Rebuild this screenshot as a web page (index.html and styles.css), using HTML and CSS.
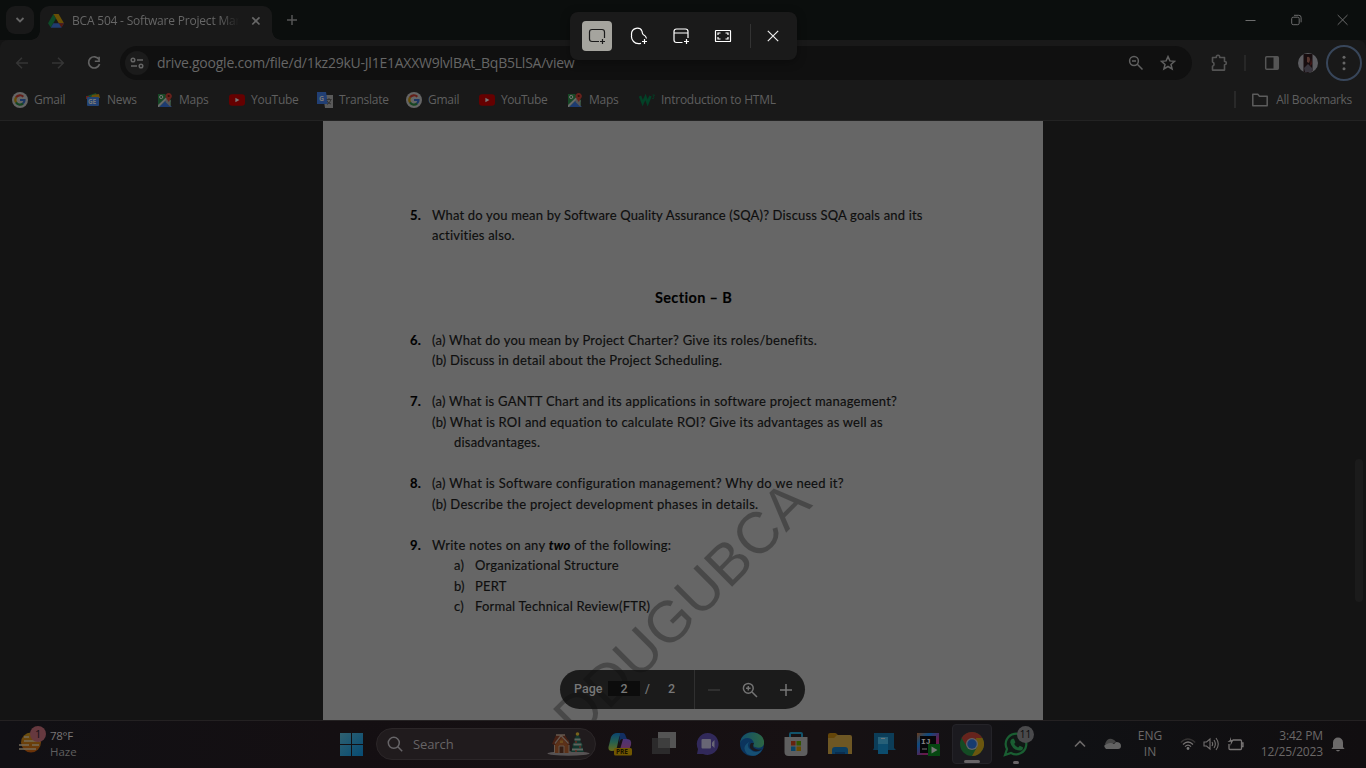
FILE: index.html
```html
<!DOCTYPE html>
<html lang="en">
<head>
<meta charset="utf-8">
<title>BCA 504 - Software Project Management</title>
<link rel="stylesheet" href="styles.css">
</head>
<body>
<svg class="defs" width="0" height="0">
  <defs>
    <linearGradient id="winG" x1="0" y1="0" x2="1" y2="1"><stop offset="0" stop-color="#2f6070"/><stop offset="1" stop-color="#064b73"/></linearGradient>
    <linearGradient id="copA" x1="0" y1="0" x2="0" y2="1"><stop offset="0" stop-color="#0b4570"/><stop offset=".5" stop-color="#256050"/><stop offset="1" stop-color="#686b18"/></linearGradient>
    <linearGradient id="copB" x1="0" y1="0" x2="0" y2="1"><stop offset="0" stop-color="#4a3478"/><stop offset="1" stop-color="#70304c"/></linearGradient>
    <linearGradient id="edgeA" x1="0" y1="0" x2="1" y2="0"><stop offset="0" stop-color="#114f6c"/><stop offset="1" stop-color="#2d6642"/></linearGradient>
    <linearGradient id="ijG" x1="0" y1="0" x2="1" y2="1"><stop offset="0" stop-color="#6a3c1c"/><stop offset=".3" stop-color="#0c4a80"/><stop offset=".65" stop-color="#6a1748"/><stop offset="1" stop-color="#303a80"/></linearGradient>
    <symbol id="g" viewBox="0 0 16 16"><circle cx="8" cy="8" r="8" fill="#656565"/><g fill="none" stroke-width="2.2"><path d="M4 5.500A4.600 4.600 0 0 1 11.300 4.700" stroke="#641e18"/><path d="M4.100 5.400a4.700 4.700 0 0 0 0 5.100" stroke="#654b05"/><path d="M4 10.400a4.600 4.600 0 0 0 7.100 1" stroke="#154522"/><path d="M8 8h4.500a4.500 4.500 0 0 1-1.500 3.500" stroke="#1b3663"/></g></symbol>
    <symbol id="yt" viewBox="0 0 16 16"><rect y="2.300" width="16" height="11.400" rx="3" fill="#650000"/><path d="M6.400 5.700v4.600l4-2.300z" fill="#777"/></symbol>
    <symbol id="map" viewBox="0 0 16 16"><path d="M1 2h7l6 6v7H1z" fill="#174826"/><path d="M2 15 8.500 8.500 15 15z" fill="#1d3b70"/><path d="m1 13 8.500-8L14 9l-3 2-2.500-2.500L2 15H1z" fill="#696969"/><path d="m9.500 5 4 4V15l-5-5z" fill="#555"/><circle cx="4.200" cy="5" r="1.600" fill="none" stroke="#777"/><path d="M11.700 10 8.600 5.100A3.200 3.200 0 1 1 14.800 5z" fill="#67221c"/><circle cx="11.700" cy="4" r="1.100" fill="#350c08"/></symbol>
  </defs>
</svg>

<div class="screen">
  <header class="titlebar">
    <div class="tab-search"><svg width="12" height="12" viewBox="0 0 12 12"><path d="m2.500 4 3.500 3.500L9.500 4" fill="none" stroke="#666" stroke-width="1.800"/></svg></div>
    <div class="tab">
      <svg width="16" height="14" viewBox="0 0 16 14"><path d="M5.400 0 8 4.500 2.800 13.400 0 9.200z" fill="#0e4a28"/><path d="M5.400 0h5.200L16 9.200h-5.200z" fill="#695006"/><path d="M5.300 9.200H16l-2.600 4.500H2.700z" fill="#203d70"/><path d="m10.800 9.200 5.200 0-2.600 4.400z" fill="#56190f"/></svg>
      <span class="tab-title">BCA 504 - Software Project Mar</span>
      <svg class="tab-x" width="10" height="10" viewBox="0 0 10 10"><path d="m1.300 1.300 7.200 7.200m0-7.200L1.300 8.500" stroke="#676767" stroke-width="1.700"/></svg>
    </div>
    <svg class="plus" width="12" height="12" viewBox="0 0 12 12"><path d="M6 1v10M1 6h10" stroke="#555" stroke-width="1.500"/></svg>
    <div class="win-buttons">
      <svg width="11" height="12" viewBox="0 0 11 12"><path d="M.5 6.500h10" stroke="#6c6c6c"/></svg>
      <svg width="11" height="12" viewBox="0 0 11 12"><rect x=".7" y="3.200" width="7.500" height="7.500" rx="1.500" fill="none" stroke="#6c6c6c"/><path d="M3 1.300h4.700a2.300 2.300 0 0 1 2.400 2.400v4.600" fill="none" stroke="#6c6c6c"/></svg>
      <svg width="11" height="12" viewBox="0 0 11 12"><path d="m.7 1 9.800 9.800m0-9.800L.7 10.800" stroke="#6c6c6c"/></svg>
    </div>
  </header>

  <div class="toolbar">
    <svg class="nav" width="16" height="16" viewBox="0 0 16 16"><path d="M14 8H3m5-5.300L2.700 8 8 13.300" fill="none" stroke="#353535" stroke-width="1.500"/></svg>
    <svg class="nav" width="16" height="16" viewBox="0 0 16 16"><path d="M2 8h11M8 2.700 13.300 8 8 13.300" fill="none" stroke="#353535" stroke-width="1.500"/></svg>
    <svg class="nav" width="16" height="16" viewBox="0 0 16 16"><path d="M13 4.400A5.600 5.600 0 1 0 13.600 9" fill="none" stroke="#626262" stroke-width="1.700"/><path d="M13.900 1.800V7H8.800V5.500h3.500V1.800z" fill="#626262"/></svg>
    <div class="omnibox">
      <div class="site-info"><svg width="14" height="12" viewBox="0 0 14 12"><g fill="none" stroke="#656565" stroke-width="1.500"><circle cx="3" cy="3" r="1.800"/><path d="M7 3h6M1 9h6"/><circle cx="11" cy="9" r="1.800"/></g></svg></div>
      <span class="url">drive.google.com/file/d/1kz29kU-Jl1E1AXXW9lvlBAt_BqB5LlSA/view</span>
      <svg class="zoomout" width="16" height="16" viewBox="0 0 16 16"><g fill="none" stroke="#606060" stroke-width="1.500"><circle cx="6" cy="6" r="4.400"/><path d="m9.300 9.300 5.200 5.200M4 6h4"/></g></svg>
      <svg width="16" height="16" viewBox="0 0 16 16"><path d="m8 1.600 1.900 4.300 4.700.4-3.600 3.100 1.100 4.600L8 11.500 3.900 14 5 9.400 1.400 6.300l4.700-.4z" fill="none" stroke="#606060" stroke-width="1.500"/></svg>
    </div>
    <div class="actions">
      <svg width="18" height="18" viewBox="0 0 18 18"><path d="M2.500 3.500h3.800V2.900a1.700 1.700 0 0 1 3.400 0v.6h4.800v4h.3a1.600 1.600 0 0 1 0 3.200h-.3v5.400h-12v-3.800a2.200 2.200 0 0 0 0-4.200z" fill="none" stroke="#545454" stroke-width="1.600" stroke-linejoin="round"/></svg>
      <i class="bar"></i>
      <svg class="panel" width="16" height="16" viewBox="0 0 16 16"><rect x="1.700" y="1.700" width="12.600" height="12.600" rx="1" fill="none" stroke="#555" stroke-width="1.500"/><path d="M9.500 2H14v12H9.500z" fill="#555"/></svg>
      <svg class="avatar" width="20" height="20" viewBox="0 0 20 20"><circle cx="10" cy="10" r="10" fill="#5d5d61"/><path d="M5.500 1 14.500 1v17l-4.500 2-4.500-1z" fill="#170d0f"/><path d="M9 4q3-1 3 3l-1 3-2-1z" fill="#573730"/><path d="m6 15 4-4 5 5-2 3H7z" fill="#38353d"/><path d="m13 5 1 6-2 2z" fill="#451818"/></svg>
      <div class="menu"><svg width="4" height="16" viewBox="0 0 4 16" fill="#666"><circle cx="2" cy="2.300" r="1.500"/><circle cx="2" cy="8" r="1.500"/><circle cx="2" cy="13.700" r="1.500"/></svg></div>
    </div>
  </div>

  <nav class="bookmarks">
    <a><svg><use href="#g"/></svg>Gmail</a>
    <a><svg viewBox="0 0 16 16"><path d="m2 4 9-3 2 5H2z" fill="#164c27"/><path d="m7 3 7-1 1 4H6z" fill="#6a4d09"/><path d="M1 4h3v3H1z" fill="#62221c"/><rect x="2" y="5" width="12" height="9" rx="1" fill="#214274"/><text x="3" y="12" class="gn">GE</text></svg>News</a>
    <a><svg><use href="#map"/></svg>Maps</a>
    <a><svg><use href="#yt"/></svg>YouTube</a>
    <a><svg viewBox="0 0 16 16"><path d="M6 3h10v13H8z" fill="#5a5a5a"/><path d="M0 0h9l2 12H0z" fill="#213f74"/><text x="2" y="8.600" class="gt">G</text><path d="M9.500 7.500h5M12 6v1.500m2 0q-1 3.500-4 5m0-3.500q1.500 2.500 4 3" fill="none" stroke="#333"/></svg><span>Translate</span></a>
    <a><svg><use href="#g"/></svg>Gmail</a>
    <a><svg><use href="#yt"/></svg><span class="tight">YouTube</span></a>
    <a><svg><use href="#map"/></svg>Maps</a>
    <a><svg viewBox="0 0 16 16"><path d="m1 4 2.700 7L6.500 5l2.200 6L11.500 4M11.500 4 10 7" fill="none" stroke="#034127" stroke-width="2.500"/><path d="M13.500 3h2L14.200 4.800q1.500.6.400 1.700-.6.500-1.400-.1" fill="none" stroke="#034127" stroke-width=".9"/></svg><span>Introduction to HTML</span></a>
    <div class="all"><svg viewBox="0 0 16 16"><path d="M.8 2.200h5l1.700 2h7.700v9.600H.8z" fill="none" stroke="#5c5c5c" stroke-width="1.500" stroke-linejoin="round"/></svg><span>All Bookmarks</span></div>
  </nav>

  <main class="viewer">
    <article class="page">
      <div class="q"><b>5.</b><div><p class="l1">What do you mean by Software Quality Assurance (SQA)? Discuss SQA goals and its</p><p class="l2">activities also.</p></div></div>
      <h2>Section – B</h2>
      <div class="q"><b>6.</b><div><p class="l3">(a) What do you mean by Project Charter? Give its roles/benefits.</p><p class="l4">(b) Discuss in detail about the Project Scheduling.</p></div></div>
      <div class="q"><b>7.</b><div><p class="l5">(a) What is GANTT Chart and its applications in software project management?</p><p class="l6">(b) What is ROI and equation to calculate ROI? Give its advantages as well as</p><p class="in">disadvantages.</p></div></div>
      <div class="q"><b>8.</b><div><p class="l7">(a) What is Software configuration management? Why do we need it?</p><p class="l8">(b) Describe the project development phases in details.</p></div></div>
      <div class="q"><b>9.</b><div><p class="l9">Write notes on any <em>two</em> of the following:</p><p class="in opt"><span>a)</span>Organizational Structure</p><p class="in opt"><span>b)</span>PERT</p><p class="in opt"><span>c)</span>Formal Technical Review(FTR)</p></div></div>
      <div class="watermark">DDUGUBCA</div>
    </article>
    <div class="pager">
      <div class="pages"><span class="lbl">Page</span><span class="num">2</span><span class="slash">/</span><span class="total">2</span></div>
      <div class="zoom">
        <svg width="14" height="14" viewBox="0 0 14 14"><path d="M1 7h12" stroke="#393939" stroke-width="1.400"/></svg>
        <svg width="16" height="16" viewBox="0 0 16 16"><g fill="none" stroke="#737373" stroke-width="1.500"><circle cx="6.300" cy="6.300" r="4.900"/><path d="m10 10 5 5M4 6.300h4.600M6.300 4v4.600"/></g></svg>
        <svg width="14" height="14" viewBox="0 0 14 14"><path d="M1 7h12M7 1v12" stroke="#777" stroke-width="1.500"/></svg>
      </div>
    </div>
    <div class="scroll-thumb"></div>
  </main>

  <footer class="taskbar">
    <div class="weather">
      <svg width="30" height="32" viewBox="0 0 30 32"><defs><linearGradient id="sun" x1="0" y1="0" x2="0" y2="1"><stop offset="0" stop-color="#6b500d"/><stop offset="1" stop-color="#6a3108"/></linearGradient></defs><circle cx="14" cy="17.500" r="10" fill="url(#sun)"/><path d="M7 12h5M7 16h16M2 20h10m3 0h7M2 24h17" stroke="#756b58" stroke-width="1.700"/><circle cx="21" cy="9" r="8" fill="#66393f"/><text x="18" y="13" class="badge">1</text></svg>
      <div class="wtext"><span>78°F</span><span>Haze</span></div>
    </div>
    <div class="apps">
      <svg class="start" width="23" height="23" viewBox="0 0 23 23"><path d="M0 0h11v11H0zM12 0h11v11H12zM0 12h11v11H0zM12 12h11v11H12z" fill="url(#winG)"/></svg>
      <div class="search">
        <svg width="16" height="16" viewBox="0 0 16 16"><g fill="none" stroke="#676568" stroke-width="1.500"><circle cx="6.800" cy="6.800" r="5.500"/><path d="m10.800 10.800 4.400 4.400"/></g></svg>
        <span>Search</span>
        <svg class="holiday" width="43" height="26" viewBox="0 0 43 26"><ellipse cx="21.500" cy="22.500" rx="21" ry="2.200" fill="#565253"/><path d="M7 22V10L14 4l8 6v12z" fill="#5c3118"/><path d="M5 13 9 4h9l5 9-2 1-6-8-7 8z" fill="#462014"/><path d="m8 12.500 6-8 7.500 8M9 4h9" fill="none" stroke="#65584e" stroke-width="1.300"/><path d="M7.500 14v8M22 14v8" stroke="#65594f"/><path d="M12 22v-7h5v7" fill="#351d13" stroke="#65594f"/><path d="M13 9.500h3v2.500h-3z" fill="#6c4b1d"/><path d="m30.500 2 3.500 7-1 1 3 4-1 1 2 6H24l2-6-1-1 3-4-1-1z" fill="#12372e"/><path d="M27.500 8.500h6M26.500 13.500h8M25 18.500h11" stroke="#5c645e" stroke-width="1.800"/><path d="M28 11h2m2 5h2m-6 4h2" stroke="#6b2a20" stroke-width="1.500"/><circle cx="30.500" cy="3" r="1.800" fill="#78631b"/></svg>
      </div>
      <svg class="app" viewBox="0 0 24 24"><path d="M1 13 3 5Q5 1 9 1h6q-3 1-4 5L9 15q-1 4-5 4-5 0-3-6z" fill="url(#copA)"/><path d="M12 1h3q2 0 3 4l1 2h-5q-2 0-3 5z" fill="#122f62"/><path d="M15 7h4q5 0 4 6l-2 5q-1 3-4 3h-6z" fill="url(#copB)"/><rect x="6" y="16" width="18" height="7.500" rx="1.500" fill="#715700"/><text x="8" y="22.200" class="pre">PRE</text></svg>
      <svg class="app" viewBox="0 0 24 24"><path d="M6 0h18v16H6z" fill="#545454"/><path d="M0 6h18v16H0z" fill="#2b2a2b"/><path d="M6 6h12v10H6z" fill="#3e3e3e"/></svg>
      <svg class="app" viewBox="0 0 24 24"><path d="M12 1a11 11 0 1 1-5 21H1l1-5A11 11 0 0 1 12 1z" fill="#31295a"/><rect x="5.500" y="7" width="9.500" height="9.500" rx="1" fill="#686675"/><path d="M16 10.500 18.500 8v8L16 13.500z" fill="#686675"/></svg>
      <svg class="app" viewBox="0 0 24 24"><circle cx="12" cy="12" r="12" fill="#0b345d"/><path d="M0 11C2-3 22-2 24 9c1 6-4 8-9 6-3-1 0-3-2-6C10 4 2 6 0 11z" fill="url(#edgeA)"/><path d="M9 10q-3 5 2 8 4 4 11 0-6 9-15 4-6-7 2-12z" fill="#164f73"/><path d="M14 11q-2 3 0 5 4 3 8 1-5 4-10 1-4-3-1-7z" fill="#1a191f"/></svg>
      <svg class="app" viewBox="0 0 24 24"><path d="M6 5V2q0-1 1-1h10q1 0 1 1v3" fill="none" stroke="#12536b" stroke-width="2"/><path d="M.5 5h23v15q0 4-4 4h-15q-4 0-4-4z" fill="#5f5f5f"/><path d="M7 9h4.500v4.500H7z" fill="#67220e"/><path d="M12.500 9H17v4.500h-4.500z" fill="#315500"/><path d="M7 14.500h4.500V19H7z" fill="#0a4567"/><path d="M12.500 14.500H17V19h-4.500z" fill="#674b00"/></svg>
      <svg class="app" viewBox="0 0 24 24"><path d="M0 3q0-2 2-2h5q2 0 4 4v5H0z" fill="#654609"/><path d="M9 3h13q2 0 2 2v17H0V6h6z" fill="#6e5724"/><path d="M4 22v-4q0-3 3-3h10q3 0 3 3v4z" fill="#0b3e62"/><path d="M7 20h10v2H7z" fill="#0a2e50"/></svg>
      <svg class="app" viewBox="0 0 24 24"><path d="M2 1h20v15l2 2H1l1-2z" fill="#0c3d58"/><path d="M6 5h10v17H6z" fill="#0c4c6d"/><path d="M6 5h10v7H6z" fill="#276078"/><path d="M9 6.500h4" stroke="#6d7479"/></svg>
      <svg class="app" viewBox="0 0 24 24"><path d="M1 1h22v22H1z" fill="url(#ijG)"/><path d="M4 4h16v17H4z" fill="#060609"/><text x="5" y="12" class="ij">IJ</text><path d="M6 17h5" stroke="#777"/><path d="M12 12h12v12H12z" fill="#064711"/><path d="m15.500 14.500 6 3.500-6 3.500z" fill="#777"/></svg>
      <div class="active"><svg class="app" viewBox="0 0 24 24"><circle cx="12" cy="12" r="12" fill="#144b24"/><path d="M1.600 6A12 12 0 0 1 22.400 6L12 12z" fill="#66231d"/><path d="M1.600 6 7 15l5-3 1-6z" fill="#66231d"/><path d="M22.400 6A12 12 0 0 1 12 24l5-9-1-9z" fill="#6b560f"/><circle cx="12" cy="12" r="6" fill="#616368"/><circle cx="12" cy="12" r="4.700" fill="#163b70"/></svg><i></i></div>
      <div class="wa"><svg width="30" height="26" viewBox="0 0 30 26"><path d="M2 24 4 18A10.300 10.300 0 1 1 8 22z" fill="#101815" stroke="#1a5e32" stroke-width="2.200"/><path d="M9.300 7.800h1.600l1.500 3.400-1.200 1.700q1.400 2.500 4 3.600l1.500-1.700 3.200 1.500q.5 3.200-3.200 3.300-7.500-.8-9.400-8.200-.2-2.600 2-3.600z" fill="#1a5e32"/></svg><b>11</b><i></i></div>
    </div>
    <div class="tray">
      <svg width="12" height="12" viewBox="0 0 12 12"><path d="m1 8.500 5-5 5 5" fill="none" stroke="#6c6969" stroke-width="1.600"/></svg>
      <svg class="cloud" width="17" height="12" viewBox="0 0 17 12"><path d="M1 6Q3 0 8 1q3 1 4 3l-8 4z" fill="#464646"/><path d="M2 11Q-2 7 3 6q4-2 7 0l2-2q5 0 5 4 0 3-3 3z" fill="#636363"/></svg>
      <div class="lang"><span>ENG</span><span>IN</span></div>
      <svg class="wifi" width="16" height="14" viewBox="0 0 16 14"><g fill="none" stroke="#747171" stroke-width="1.200"><path d="M.8 5.500q7-7 14.400 0" stroke="#343232"/><path d="M3 7.500q5-5 10 0M5 9.700q3-3 6 0"/></g><circle cx="8" cy="11.500" r="1.400" fill="#777"/></svg>
      <svg class="vol" width="17" height="14" viewBox="0 0 17 14"><g fill="none" stroke="#716e6e" stroke-width="1.100"><path d="M1 5h2.500L7 2v10L3.500 9H1z"/><path d="M9 5q1.300 2 0 4m2-6q2.700 4 0 8m2-10q4.500 6 0 12"/></g></svg>
      <svg class="bat" width="17" height="14" viewBox="0 0 17 14"><path d="M5.500 3h8q1 0 1 1v7.500q0 1-1 1H3q-1 0-1-1V7M15 6h1v3.500h-1" fill="none" stroke="#777474" stroke-width="1.300"/><path d="M3 0v3L.5 5 4 4.800 3.300 9 6.500 3 4.300 3z" fill="#777474"/></svg>
      <div class="clock"><span class="time">3:42 PM</span><span class="date">12/25/2023</span></div>
      <svg class="bell" width="14" height="16" viewBox="0 0 14 16"><path d="M2 11V6.500a5 5 0 0 1 10 0V11l1.600 2H.4zM4.800 14h4.400q-2.200 2.800-4.400 0z" fill="#6c6a6a"/></svg>
    </div>
  </footer>

  <div class="snip">
    <div class="mode"><svg width="18" height="18" viewBox="0 0 18 18"><path d="M11 14.500H4Q1.500 14.500 1.500 12V5Q1.500 2.500 4 2.500h10q2.500 0 2.500 2.500v6M14.500 12v5M12 14.500h5" fill="none" stroke="#1a1a1a" stroke-width="1.200"/></svg></div>
    <svg width="18" height="18" viewBox="0 0 18 18"><path d="M11 16.300Q6 17.300 3.500 14.500 1 12 1.600 8.500.8 2.500 6 1.300 10.500.5 11.900 4c.7 1.500-.2 2.700 1.600 3.800Q16 9 16.500 11.500M14.500 12v5M12 14.500h5" fill="none" stroke="#fff" stroke-width="1.200"/></svg>
    <svg width="18" height="18" viewBox="0 0 18 18"><path d="M10.500 15.500H4.500Q2 15.500 2 13V4.500Q2 2 4.500 2h9Q16 2 16 4.500V11M2 6h14M14.500 12v5M12 14.500h5" fill="none" stroke="#fff" stroke-width="1.200"/></svg>
    <svg width="18" height="18" viewBox="0 0 18 18"><g fill="none" stroke="#fff" stroke-width="1.200"><rect x="1.500" y="3.500" width="15" height="11" rx=".6"/><path d="M4 8V6h2.500m5 0H14v2M4 10v2h2.500m5 0H14v-2"/></g></svg>
    <i></i>
    <svg class="close" width="12" height="12" viewBox="0 0 12 12"><path d="m.8.800 10.400 10.400m0-10.400L.8 11.200" stroke="#eee" stroke-width="1.200"/></svg>
  </div>
</div>
</body>
</html>
```
FILE: styles.css
```css
* { box-sizing: border-box; }
body { margin: 0; background: #141414; font-family: "Open Sans", "Noto Sans", sans-serif; }
svg { display: block; flex: none; }
.defs { position: absolute; }
.screen { position: relative; width: 1366px; height: 768px; overflow: hidden; display: flex; flex-direction: column; color: #5f5f5f; font-size: 12px; white-space: nowrap; }

.titlebar { height: 40px; flex: none; display: flex; background: #0b0e0d; }
.tab-search { width: 28px; height: 28px; margin: 6px 0 0 6px; border-radius: 9px; background: #191919; display: grid; place-items: center; }
.tab { position: relative; width: 232px; height: 34px; margin: 6px 0 0 6px; border-radius: 9px 9px 0 0; background: #191919; display: flex; align-items: center; padding: 0 0 5px 8px; color: #666; }
.tab::before, .tab::after { content: ""; position: absolute; bottom: 0; width: 9px; height: 9px; }
.tab::before { left: -9px; background: radial-gradient(circle at 0 0, transparent 8.5px, #191919 9px); }
.tab::after { right: -9px; background: radial-gradient(circle at 100% 0, transparent 8.5px, #191919 9px); }
.tab-title { width: 171px; margin-left: 8px; letter-spacing: -.2px; -webkit-mask-image: linear-gradient(90deg, #000 86%, transparent 98%); }
.tab-x { margin-left: 8px; }
.plus { margin: 14px 0 0 14px; }
.win-buttons { margin: 14px 18px 0 auto; display: flex; gap: 35px; }

.toolbar { height: 46px; flex: none; display: flex; align-items: center; background: #191919; padding-left: 14px; border-radius: 8px 8px 0 0; }
.nav { margin-right: 20px; }
.omnibox { width: 1072px; height: 34px; margin-left: -2px; border-radius: 17px; background: #101010; display: flex; align-items: center; padding: 0 16px 0 5px; }
.site-info { width: 24px; height: 24px; border-radius: 50%; background: #1b1b1b; display: grid; place-items: center; }
.url { margin-left: 8px; padding-bottom: 1px; font-size: 14px; letter-spacing: -.23px; color: #666; }
.zoomout { margin: 0 16px 0 auto; }
.actions { display: flex; align-items: center; margin-left: 18px; }
.bar { width: 2px; height: 16px; margin: 0 18px 0 16px; background: #272727; }
.avatar { margin: 0 8px 0 18px; }
.menu { width: 36px; height: 36px; border: 2px solid #38465a; border-radius: 50%; display: grid; place-items: center; }

.bookmarks { height: 35px; flex: none; background: #191919; border-bottom: 1px solid #232323; padding: 0 14px 7px 12px; display: grid; grid-template-columns: 73px 72px 72px 88px 89px 73px 88px 72px 160px 1fr; align-items: center; letter-spacing: -.25px; }
.bookmarks a, .all { display: flex; align-items: center; gap: 6px; }
.bookmarks svg { width: 16px; height: 16px; }
.bookmarks .tight { letter-spacing: -.45px; }
.gn { font: bold 6.5px "Open Sans", sans-serif; fill: #777; }
.gt { font: bold 7px "Open Sans", sans-serif; fill: #777; }
.all { justify-self: end; gap: 8px; border-left: 2px solid #292929; padding-left: 16px; letter-spacing: -.33px; }

.viewer { position: relative; flex: 1; background: #141414; overflow: hidden; }
.page { position: relative; width: 720px; height: 599px; margin-left: 323px; background: #666; padding: 84px 0 0 87px; font: 13px/20.5px Lato, sans-serif; letter-spacing: .21px; color: #0e0e0e; overflow: hidden; -webkit-text-stroke: .15px #0e0e0e; }
.page p { margin: 0; width: max-content; }
.page .l1 { letter-spacing: .17px; }
.page .l2 { margin-top: -1px; }
.page .l3, .page .l5 { letter-spacing: .24px; }
.page .l7, .page .l8 { letter-spacing: .29px; }
.page .l9 { letter-spacing: .26px; }
.q { display: flex; margin-bottom: 20.5px; }
.q > b { width: 22px; color: #000; }
.page h2 { margin: 0 0 17px 245px; padding-top: 17px; font-size: 14.5px; line-height: 30px; color: #000; letter-spacing: .35px; }
.page .in { margin-left: 22px; }
.opt { display: flex; }
.opt span { width: 21px; }
.page em { font-weight: bold; color: #000; }
.watermark { position: absolute; left: 256px; top: 618px; font: 58.2px/0 "Liberation Sans", sans-serif; letter-spacing: 0; color: rgba(0, 0, 0, .29); -webkit-text-stroke: 0; transform-origin: 0 0; transform: rotate(-45deg) translate(-2px, -19.5px); }

.pager { position: absolute; left: 560px; top: 549px; width: 245px; height: 39px; border-radius: 20px; background: rgba(11, 11, 11, .82); display: flex; overflow: hidden; color: #777; font: 500 12.5px Roboto, sans-serif; }
.pages { width: 135px; display: flex; align-items: center; padding: 0 0 2px 14px; border-right: 1px solid #303030; }
.lbl { width: 34px; }
.num { width: 32px; height: 15px; line-height: 15px; background: #0c0c0c; text-align: center; }
.slash { margin-left: 5px; width: 23px; }
.zoom { flex: 1; display: flex; align-items: center; padding-left: 12px; gap: 21px; }
.scroll-thumb { position: absolute; left: 1355px; top: 338px; width: 8px; height: 143px; border-radius: 4px; background: #1b1b1b; }

.taskbar { height: 48px; flex: none; display: flex; border-top: 1px solid #242122; background: linear-gradient(90deg, #111014, #140f12 25%, #171113 60%, #101114 78%, #110e10); }
.weather { width: 339px; display: flex; padding: 4px 0 0 17px; }
.wtext { display: flex; flex-direction: column; margin-left: 3px; line-height: 16px; font-size: 11.5px; padding-top: 3px; }
.wtext span:first-child { color: #797576; letter-spacing: -.3px; }
.badge { font-size: 11px; fill: #151015; }
.apps { width: 726px; display: flex; align-items: center; padding-bottom: 1px; }
.start { margin-left: 1px; }
.search { width: 220px; height: 32px; margin: 0 12px 0 13px; border-radius: 16px; background: #201b1d; border: 1px solid #2b2628; display: flex; align-items: center; padding: 0 5px 0 10px; font-size: 13px; letter-spacing: -.1px; color: #676466; }
.search span { margin-left: 10px; }
.holiday { margin-left: auto; }
.app { width: 24px; height: 24px; margin-right: 20px; }
.pre { font: bold 6.5px "Open Sans", sans-serif; fill: #171200; }
.ij { font: bold 8px "Liberation Mono", monospace; fill: #888; }
.active { position: relative; width: 40px; height: 40px; margin-left: -8px; border-radius: 4px; border: 1px solid #242328; background: #1b1a1f; display: grid; place-items: center; }
.active .app { margin: 0; }
.active i, .wa i { position: absolute; bottom: 0; left: 11px; width: 16px; height: 3px; border-radius: 2px; background: #686467; }
.wa { position: relative; width: 40px; height: 40px; margin-left: 4px; padding: 7px; }
.wa b { position: absolute; left: 21px; top: 2px; width: 17px; height: 17px; border-radius: 50%; background: #4a4a4c; color: #0c0c0c; font-size: 10px; line-height: 17px; text-align: center; font-weight: 400; }
.wa i { left: 17px; width: 6px; }
.tray { flex: 1; display: flex; align-items: center; padding: 0 0 1px 9px; color: #6b6868; line-height: 16px; }
.cloud { margin-left: 18px; }
.lang { width: 42px; margin-left: 8px; display: flex; flex-direction: column; align-items: center; }
.wifi { margin-left: 9px; }
.vol { margin-left: 7px; }
.bat { margin-left: 7px; }
.clock { width: 79px; display: flex; flex-direction: column; align-items: flex-end; letter-spacing: -.15px; }
.bell { margin-left: 8px; }

.snip { position: absolute; left: 570px; top: 12px; width: 227px; height: 48px; border-radius: 8px; background: #1a1a1a; box-shadow: 0 2px 10px rgba(0, 0, 0, .35); display: flex; align-items: center; padding-left: 12px; gap: 24px; }
.mode { width: 30px; height: 30px; margin-right: -6px; border-radius: 4px; background: #a5a49e; display: grid; place-items: center; }
.snip i { width: 1px; height: 24px; margin: 0 -7px 0 -6px; background: #333; }
.snip .close { margin-left: -1px; }
```
